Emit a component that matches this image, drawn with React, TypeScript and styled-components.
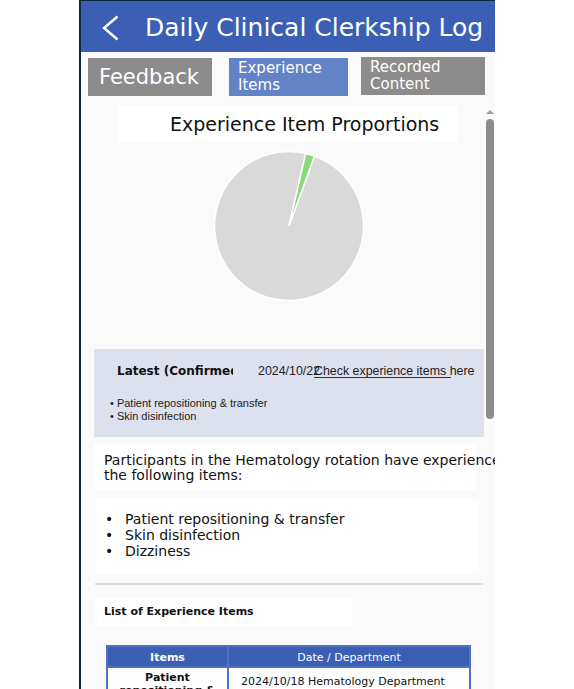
import React from "react";
import styled, { createGlobalStyle } from "styled-components";

const Global = createGlobalStyle`
  html, body { margin: 0; padding: 0; background: #ffffff; }
  body { font-family: "DejaVu Sans", sans-serif; }
  #root { width: 100%; }
`;

const Frame = styled.div`
  position: relative;
  width: 414px;
  height: 689px;
  margin: 0 auto;
  border-left: 2px solid #0f2c3c;
  background: #fafafa;
  overflow: hidden;
`;

const Header = styled.header`
  box-sizing: border-box;
  height: 52px;
  border-top: 1px solid #0f2c3c;
  background: #3a5fb4;
  display: flex;
  align-items: center;
  padding: 2px 0 0 21px;
  gap: 26px;
  color: #ffffff;
`;

const Title = styled.h1`
  margin: 0;
  font-size: 25px;
  font-weight: normal;
  white-space: nowrap;
`;

const Tabs = styled.nav`
  display: flex;
  align-items: flex-start;
  margin-top: 5px;
  padding-left: 7px;
  height: 39px;
`;

const Tab = styled.div<{ $bg: string; $w: number; $ml: number; $mt: number; $size: number }>`
  box-sizing: border-box;
  width: ${(p) => p.$w}px;
  height: 38px;
  margin-left: ${(p) => p.$ml}px;
  margin-top: ${(p) => p.$mt}px;
  background: ${(p) => p.$bg};
  color: #ffffff;
  display: flex;
  align-items: center;
  padding-left: ${(p) => (p.$size > 18 ? 11 : 9)}px;
  font-size: ${(p) => p.$size}px;
  line-height: ${(p) => (p.$size > 18 ? "normal" : "17px")};
`;

const ChartTitle = styled.div`
  box-sizing: border-box;
  margin: 9px 0 0 36px;
  width: 341px;
  height: 37px;
  background: #ffffff;
  display: flex;
  align-items: center;
  padding-left: 53px;
  font-size: 19px;
  color: #111111;
`;

const PieWrap = styled.div`
  display: flex;
  justify-content: center;
  margin-top: 8px;
  height: 152px;
  padding-left: 1px;
`;

const InfoBox = styled.section`
  box-sizing: border-box;
  margin: 47px 0 0 13px;
  width: 390px;
  height: 88px;
  background: #dde1ee;
  padding-top: 15px;
`;

const InfoRow = styled.div`
  display: grid;
  grid-template-columns: 116px 56px 137px;
  padding-left: 23px;
  height: 14px;
  line-height: 14px;
`;

const LatestTitle = styled.div`
  width: 116px;
  overflow: hidden;
  white-space: nowrap;
  font-weight: bold;
  font-size: 12px;
  color: #111111;
`;

const DateText = styled.div`
  margin-left: 25px;
  width: 56px;
  white-space: nowrap;
  font-family: "Liberation Sans", Arial, sans-serif;
  font-size: 12.4px;
  color: #222222;
`;

const CheckLink = styled.a`
  position: relative;
  z-index: 1;
  margin-left: 25px;
  display: block;
  width: 137px;
  height: 13px;
  border-bottom: 1px solid #333333;
  white-space: nowrap;
  font-family: "Liberation Sans", Arial, sans-serif;
  font-size: 12.4px;
  color: #222222;
  text-decoration: none;
`;

const SmallList = styled.ul`
  margin: 19px 0 0 0;
  padding: 0 0 0 16px;
  list-style: none;
  font-family: "Liberation Sans", Arial, sans-serif;
  font-size: 11px;
  line-height: 13px;
  color: #222222;
`;

const Para = styled.div`
  box-sizing: border-box;
  margin: 7px 0 0 13px;
  width: 382px;
  height: 46px;
  background: #ffffff;
  padding: 9px 0 0 10px;
`;

const ParaText = styled.p`
  margin: 0;
  width: 412px;
  font-size: 14px;
  line-height: 15px;
  color: #111111;
`;

const ListBox = styled.ul`
  box-sizing: border-box;
  margin: 9px 0 0 15px;
  width: 383px;
  height: 74px;
  background: #ffffff;
  padding: 12px 0 0 9px;
  list-style: none;
  font-size: 14px;
  color: #111111;
`;

const ListItem = styled.li`
  display: flex;
`;

const Bullet = styled.span`
  width: 20px;
  flex: none;
`;

const Divider = styled.hr`
  margin: 10px 0 0 14px;
  width: 388px;
  height: 2px;
  border: none;
  background: #dedede;
`;

const SectionTitle = styled.div`
  box-sizing: border-box;
  margin: 13px 0 0 14px;
  width: 257px;
  height: 28px;
  background: #ffffff;
  display: flex;
  align-items: center;
  padding: 0 0 2px 9px;
  font-size: 11px;
  font-weight: bold;
  color: #111111;
`;

const Table = styled.div`
  margin: 19px 0 0 25px;
  width: 361px;
  border: 2px solid #4d72c4;
  background: #4d72c4;
  display: grid;
  grid-template-columns: 119px 1fr;
  column-gap: 2px;
  font-size: 11px;
`;

const HeadCell = styled.div<{ $bold?: boolean }>`
  box-sizing: border-box;
  height: 19px;
  padding-top: 2px;
  background: #3a5fb4;
  color: #ffffff;
  text-align: center;
  line-height: 17px;
  font-weight: ${(p) => (p.$bold ? "bold" : "normal")};
`;

const Cell = styled.div<{ $bold?: boolean }>`
  background: #ffffff;
  color: #111111;
  margin-top: 2px;
  padding: ${(p) => (p.$bold ? "3px 6px" : "7px 0 0 12px")};
  text-align: ${(p) => (p.$bold ? "center" : "left")};
  font-weight: ${(p) => (p.$bold ? "bold" : "normal")};
  line-height: 13px;
  min-height: 40px;
`;

const ScrollTrack = styled.div`
  position: absolute;
  top: 110px;
  left: 404px;
  width: 9px;
  display: flex;
  flex-direction: column;
  align-items: center;
`;

const ScrollArrow = styled.div`
  width: 0;
  height: 0;
  border-left: 4px solid transparent;
  border-right: 4px solid transparent;
  border-bottom: 4px solid #a0a0a0;
`;

const ScrollThumb = styled.div`
  margin-top: 5px;
  width: 8px;
  height: 300px;
  border-radius: 4px;
  background: #8c8c8c;
`;

const Back = () => (
  <svg width="17" height="26" viewBox="0 0 17 26">
    <polyline points="15.5,1.5 2,13 15.5,24.5" fill="none" stroke="#ffffff" strokeWidth="2.4" strokeLinejoin="miter" />
  </svg>
);

const Pie = () => {
  const c = 76;
  const r = 74.5;
  const pt = (deg: number) => {
    const a = (deg * Math.PI) / 180;
    return `${(c + r * Math.sin(a)).toFixed(2)} ${(c - r * Math.cos(a)).toFixed(2)}`;
  };
  return (
    <svg width="152" height="152" viewBox="0 0 152 152">
      <path d={`M${c} ${c} L${pt(20)} A${r} ${r} 0 1 1 ${pt(13)} Z`} fill="#d9d9d9" stroke="#ffffff" strokeWidth="1.5" />
      <path d={`M${c} ${c} L${pt(13)} A${r} ${r} 0 0 1 ${pt(20)} Z`} fill="#8bd878" stroke="#ffffff" strokeWidth="1.5" />
    </svg>
  );
};

export default function App() {
  return (
    <>
      <Global />
      <Frame>
        <Header>
          <Back />
          <Title>Daily Clinical Clerkship Log</Title>
        </Header>
        <Tabs>
          <Tab $bg="#8c8c8c" $w={124} $ml={0} $mt={1} $size={21}>Feedback</Tab>
          <Tab $bg="#6283c7" $w={119} $ml={17} $mt={1} $size={15}>Experience<br />Items</Tab>
          <Tab $bg="#8c8c8c" $w={124} $ml={13} $mt={0} $size={15}>Recorded<br />Content</Tab>
        </Tabs>
        <ChartTitle>Experience Item Proportions</ChartTitle>
        <PieWrap>
          <Pie />
        </PieWrap>
        <InfoBox>
          <InfoRow>
            <LatestTitle>Latest (Confirmed)</LatestTitle>
            <DateText>2024/10/22</DateText>
            <CheckLink href="#">Check experience items here</CheckLink>
          </InfoRow>
          <SmallList>
            <li>• Patient repositioning &amp; transfer</li>
            <li>• Skin disinfection</li>
          </SmallList>
        </InfoBox>
        <Para>
          <ParaText>Participants in the Hematology rotation have experienced the following items:</ParaText>
        </Para>
        <ListBox>
          <ListItem><Bullet>•</Bullet>Patient repositioning &amp; transfer</ListItem>
          <ListItem><Bullet>•</Bullet>Skin disinfection</ListItem>
          <ListItem><Bullet>•</Bullet>Dizziness</ListItem>
        </ListBox>
        <Divider />
        <SectionTitle>List of Experience Items</SectionTitle>
        <Table>
          <HeadCell $bold>Items</HeadCell>
          <HeadCell>Date / Department</HeadCell>
          <Cell $bold>Patient repositioning &amp; transfer</Cell>
          <Cell>2024/10/18 Hematology Department</Cell>
        </Table>
        <ScrollTrack>
          <ScrollArrow />
          <ScrollThumb />
        </ScrollTrack>
      </Frame>
    </>
  );
}
